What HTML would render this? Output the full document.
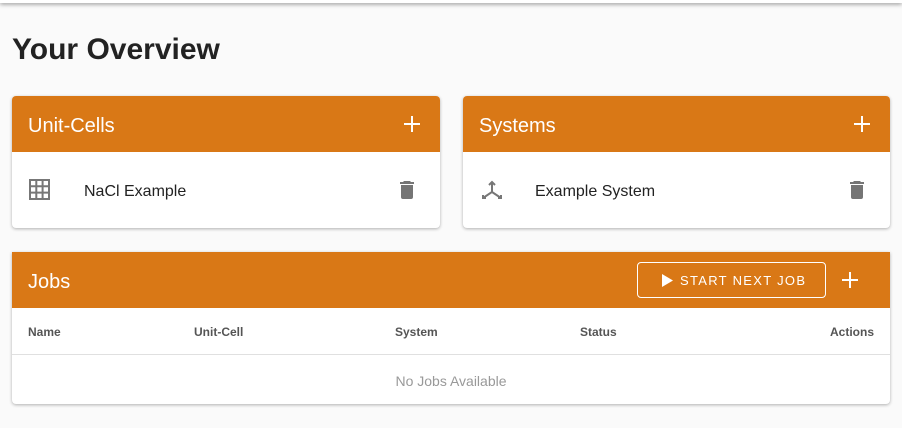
<!DOCTYPE html>
<html><head><style>
*{box-sizing:border-box;margin:0;padding:0}
body{width:902px;height:428px;background:#fafafa;font-family:"Liberation Sans",sans-serif;position:relative;overflow:hidden}
.top{position:absolute;left:0;top:0;width:902px;height:3px;background:#fff;box-shadow:0 1px 4px rgba(0,0,0,.5)}
h1{position:absolute;left:12px;top:33px;font-size:30px;font-weight:bold;color:#222}
.card{position:absolute;background:#fff;border-radius:4px;box-shadow:0 1px 3px rgba(0,0,0,.3);overflow:hidden}
.hd{background:#d97816;height:56px;color:#fff;font-size:20px;display:flex;align-items:center;padding:4px 16px 0;position:relative}
.plus{position:absolute;right:20px;top:20px;width:16px;height:16px}
.plus:before,.plus:after{content:"";position:absolute;background:#fff}
.plus:before{left:7px;top:0;width:2px;height:16px}
.plus:after{top:7px;left:0;height:2px;width:16px}
.row{height:76px;position:relative;font-size:16px;color:#222}
.row span{position:absolute;left:72px;top:31px}
.ic{position:absolute;left:17px;top:27px}
.tr{position:absolute;right:26px;top:29px}
</style></head><body>
<div class="top"></div>
<h1>Your Overview</h1>
<div class="card" style="left:12px;top:96px;width:428px;height:132px">
<div class="hd">Unit-Cells<div class="plus"></div></div>
<div class="row">
<svg class="ic" width="22" height="22" viewBox="0 0 22 22" fill="none" stroke="#777" stroke-width="2"><rect x="1" y="1" width="19" height="19"/><path d="M7.3 1v19M13.6 1v19M1 7.3h19M1 13.6h19"/></svg>
<span>NaCl Example</span>
<svg class="tr" width="14" height="18" viewBox="0 0 14 18"><path d="M4 0h6l1 1h3v2H0V1h3z M1 4h12v12a2 2 0 0 1-2 2H3a2 2 0 0 1-2-2z" fill="#757575"/></svg>
</div></div>
<div class="card" style="left:463px;top:96px;width:427px;height:132px">
<div class="hd">Systems<div class="plus"></div></div>
<div class="row">
<svg class="ic" width="24" height="24" viewBox="0 0 24 24" fill="none" stroke="#777" stroke-width="2"><path d="M12 3v10L3 19M12 13l9 6M9 6l3-3 3 3M3 16v3h3M21 16v3h-3"/></svg>
<span>Example System</span>
<svg class="tr" width="14" height="18" viewBox="0 0 14 18"><path d="M4 0h6l1 1h3v2H0V1h3z M1 4h12v12a2 2 0 0 1-2 2H3a2 2 0 0 1-2-2z" fill="#757575"/></svg>
</div></div>
<div class="card" style="left:12px;top:252px;width:878px;height:152px;border-radius:0 0 4px 4px">
<div class="hd">Jobs
<div style="position:absolute;left:625px;top:10px;width:189px;height:36px;border:1px solid #fff;border-radius:4px;font-size:13px;letter-spacing:1.3px;display:flex;align-items:center;padding-left:24px"><svg width="11" height="13" viewBox="0 0 11 13" style="margin-right:7px"><path d="M0 0l11 6.5L0 13z" fill="#fff"/></svg>START NEXT JOB</div>
<div class="plus" style="right:32px"></div></div>
<div style="position:relative;height:47px;border-bottom:1px solid #e0e0e0;font-size:12px;font-weight:bold;color:#555">
<span style="position:absolute;left:16px;top:17px">Name</span>
<span style="position:absolute;left:182px;top:17px">Unit-Cell</span>
<span style="position:absolute;left:383px;top:17px">System</span>
<span style="position:absolute;left:568px;top:17px">Status</span>
<span style="position:absolute;right:16px;top:17px">Actions</span>
</div>
<div style="text-align:center;font-size:14px;color:#999;padding-top:18px">No Jobs Available</div>
</div>
</body></html>
